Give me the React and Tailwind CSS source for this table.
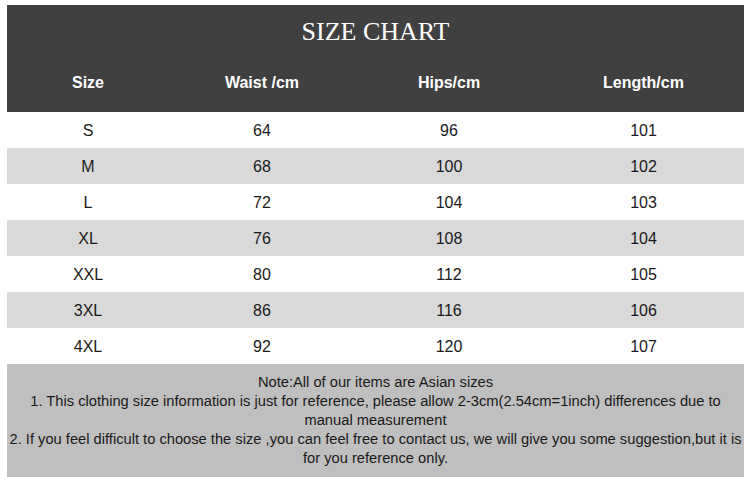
const rows = [
  ["S", "64", "96", "101"],
  ["M", "68", "100", "102"],
  ["L", "72", "104", "103"],
  ["XL", "76", "108", "104"],
  ["XXL", "80", "112", "105"],
  ["3XL", "86", "116", "106"],
  ["4XL", "92", "120", "107"],
];

const cols = "grid grid-cols-[162px_186px_188px_201px]";

export default function App() {
  return (
    <div className="w-[750px] h-[481px] bg-white pt-[5px] pl-[7px] font-['Liberation_Sans',Arial,sans-serif]">
      <div className="w-[737px]">
        {/* Header */}
        <div className="bg-[#404040] text-white">
          <div className="h-[52px] flex items-center justify-center pt-[1px] font-['Liberation_Serif','Times_New_Roman',serif] text-[26px]">
            SIZE CHART
          </div>
          <div className={`${cols} h-[55px] items-center pb-[4px] text-[16px] font-bold`}>
            <div className="text-center">Size</div>
            <div className="text-center">Waist /cm</div>
            <div className="text-center">Hips/cm</div>
            <div className="text-center">Length/cm</div>
          </div>
        </div>

        {/* Rows */}
        {rows.map((r, i) => (
          <div
            key={r[0]}
            className={`${cols} h-[36px] items-center pt-[1px] text-[16px] text-[#1a1a1a] ${
              i % 2 === 1 ? "bg-[#d9d9d9]" : "bg-white"
            }`}
          >
            {r.map((c, j) => (
              <div key={j} className="text-center">
                {c}
              </div>
            ))}
          </div>
        ))}

        {/* Notes */}
        <div className="bg-[#bfbfbf] h-[113px] px-[2px] pt-[9px] text-center text-[14.7px] leading-[19px] text-[#1a1a1a]">
          <p>Note:All of our items are Asian sizes</p>
          <p>
            1. This clothing size information is just for reference, please allow 2-3cm(2.54cm=1inch) differences due to manual measurement
          </p>
          <p>
            2. If you feel difficult to choose the size ,you can feel free to contact us, we will give you some suggestion,but it is for you reference only.
          </p>
        </div>
      </div>
    </div>
  );
}
